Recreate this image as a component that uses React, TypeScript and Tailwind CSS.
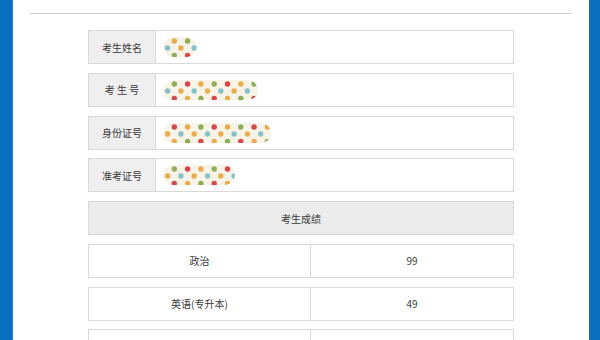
import React from "react";

function Dots({ width, seed = 0 }: { width: number; seed?: number }) {
  const h = 20;
  const id = `clip-${width}-${seed}`;
  const top: React.ReactNode[] = [];
  const mid: React.ReactNode[] = [];
  const bot: React.ReactNode[] = [];
  const step = 13.3;
  const cols = ["#e9ad4f", "#8fae5a", "#d8474b", "#e9ad4f", "#8fae5a", "#d8474b"];
  const midCols = ["#86c3c9", "#e9ad4f", "#86c3c9", "#e9ad4f", "#86c3c9", "#e9ad4f"];
  const botCols = ["#e9ad4f", "#8fae5a", "#d8474b", "#e9ad4f", "#8fae5a", "#d8474b"];
  for (let i = 0; i * step < width + 10; i++) {
    top.push(<circle key={`t${i}`} cx={-2 + i * step} cy={4} r={2.7} fill={cols[(i + seed) % cols.length]} />);
    mid.push(<circle key={`m${i}`} cx={4.6 + i * step} cy={11} r={2.7} fill={midCols[(i + seed) % midCols.length]} />);
    bot.push(<circle key={`b${i}`} cx={-2 + i * step} cy={18.5} r={2.7} fill={botCols[(i + seed + 1) % botCols.length]} />);
  }
  return (
    <svg width={width} height={h} viewBox={`0 0 ${width} ${h}`} className="blur-[0.4px]">
      <defs>
        <clipPath id={id}>
          <rect x={0} y={0} width={width} height={h} rx={10} ry={10} />
        </clipPath>
      </defs>
      <g clipPath={`url(#${id})`}>
        <rect x={0} y={0} width={width} height={h} fill="#f7f3e6" />
        {top}
        {mid}
        {bot}
      </g>
    </svg>
  );
}

function InfoRow({ label, dots, seed }: { label: string; dots: number; seed: number }) {
  return (
    <div className="flex h-[34px] border border-[#d9d9d9] bg-white">
      <div className="flex w-[67px] shrink-0 items-center justify-center border-r border-[#d9d9d9] bg-[#efefef] text-[10px] text-[#3a3a3a] whitespace-pre">
        {label}
      </div>
      <div className="flex items-center pl-[7px]">
        <Dots width={dots} seed={seed} />
      </div>
    </div>
  );
}

function ScoreRow({ name, score }: { name: string; score: string }) {
  return (
    <div className="grid h-[34px] grid-cols-[222px_1fr] border border-[#d9d9d9] bg-white text-[10px] text-[#3a3a3a]">
      <div className="flex items-center justify-center border-r border-[#d9d9d9]">{name}</div>
      <div className="flex items-center justify-center">{score}</div>
    </div>
  );
}

export default function App() {
  return (
    <div
      className="flex h-[340px] w-[600px] overflow-hidden bg-white"
      style={{ fontFamily: '"Noto Sans CJK SC", "Noto Sans", sans-serif' }}
    >
      <div className="w-[13px] shrink-0 bg-[#0b6fc1] border-r border-[#2f7fc0]" />
      <div className="flex min-w-0 flex-1 flex-col">
        <div className="mx-[17px] mt-[13px] h-px shrink-0 bg-[#cfcfcf]" />
        <div className="mx-auto mt-[16px] flex w-[426px] flex-col gap-[8.75px]">
          <InfoRow label="考生姓名" dots={34} seed={2} />
          <InfoRow label="考 生 号" dots={95} seed={0} />
          <InfoRow label="身份证号" dots={108} seed={1} />
          <InfoRow label="准考证号" dots={72} seed={3} />
          <div className="flex h-[34px] shrink-0 items-center justify-center border border-[#d9d9d9] bg-[#ececec] text-[10px] text-[#3a3a3a]">
            考生成绩
          </div>
          <ScoreRow name="政治" score="99" />
          <ScoreRow name="英语(专升本)" score="49" />
          <ScoreRow name="" score="" />
        </div>
      </div>
      <div className="w-[11px] shrink-0 bg-[#0b6fc1]" />
    </div>
  );
}
